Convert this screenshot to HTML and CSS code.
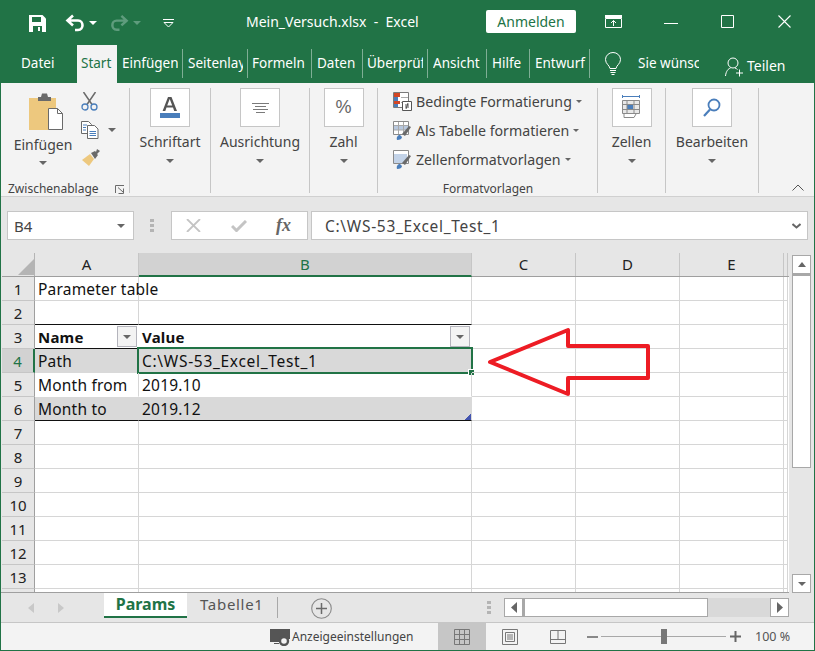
FILE: index.html
```html
<!DOCTYPE html>
<html>
<head>
	<title>Mein_Versuch.xlsx - Excel</title>
	<meta name="viewport" content="width=device-width, initial-scale=1">
	<link rel="stylesheet" href="styles.css">
</head>
<body>
<div class="app">
	<div class="titlebar">
		<svg class="qa-save" width="17" height="17" viewBox="0 0 17 17"><path fill="#fff" d="M0 0h13.5L17 3.5V17H0z"/><path fill="#217346" d="M3 2h9v5H3zM4 11h9v6H4z"/><path fill="#fff" d="M9 12h2v4H9z"/></svg>
		<svg class="qa-undo" width="20" height="18" viewBox="0 0 20 18"><path fill="none" stroke="#fff" stroke-width="2.6" d="M8 1.5 2.5 6.5 8 11.500M2.500 6.500H13c6 0 6 9.500 0 9.500H10"/></svg>
		<span class="caret white qa-c1"></span>
		<svg class="qa-redo" width="19" height="18" viewBox="0 0 20 18"><path fill="none" stroke="#5f9c7d" stroke-width="2.6" d="M12 1.500 17.500 6.500 12 11.500M17.500 6.500H7c-6 0-6 9.500 0 9.500h3"/></svg>
		<span class="caret dim qa-c2"></span>
		<svg class="qa-more" width="11" height="9" viewBox="0 0 11 9"><path fill="#fff" d="M0 0h11v1H0z"/><path fill="none" stroke="#fff" d="M1 3.500h9L5.500 8z"/></svg>
		<div class="doc-title">Mein_Versuch.xlsx&nbsp; -&nbsp; Excel</div>
		<div class="signin">Anmelden</div>
		<svg class="win-display" width="17" height="13" viewBox="0 0 17 13"><path fill="none" stroke="#fff" d="M.5 3.500h16v9H.5z"/><path fill="#fff" d="M0 0h17v3H0z"/><path fill="none" stroke="#fff" d="M8.500 11V5.500M6 8l2.500-2.500L11 8"/></svg>
		<svg class="win-min" width="14" height="1" viewBox="0 0 14 1"><path fill="#fff" d="M0 0h14v1H0z"/></svg>
		<svg class="win-max" width="13" height="13" viewBox="0 0 13 13"><path fill="none" stroke="#fff" d="M.5.500h12v12H.5z"/></svg>
		<svg class="win-close" width="13" height="13" viewBox="0 0 13 13"><path stroke="#fff" stroke-width="1.100" d="M.5.500l12 12M12.500.500l-12 12"/></svg>
	</div>

	<div class="tabs">
		<div class="tab tab-file"><span>Datei</span></div>
		<div class="tab tab-active"><span>Start</span></div>
		<div class="tab tab-ins sep"><span>Einfügen</span></div>
		<div class="tab tab-lay sep"><span>Seitenlayout</span></div>
		<div class="tab tab-for sep"><span>Formeln</span></div>
		<div class="tab tab-dat sep"><span>Daten</span></div>
		<div class="tab tab-rev sep"><span>Überprüfen</span></div>
		<div class="tab tab-vie sep"><span>Ansicht</span></div>
		<div class="tab tab-hil sep"><span>Hilfe</span></div>
		<div class="tab tab-ent sep"><span>Entwurf</span></div>
		<svg class="bulb" width="16" height="24" viewBox="0 0 16 24"><path fill="none" stroke="#fff" d="M5 16.500C4.500 13 .5 12 .5 7.500a7.500 7 0 0 1 15 0C15.500 12 11.500 13 11 16.500z"/><path stroke="#fff" d="M5 18.500h6M5.500 20.500h5M6.500 22.500h3"/></svg>
		<div class="tell">Sie wünschen</div>
		<svg class="share-icon" width="20" height="20" viewBox="0 0 20 20"><circle cx="8" cy="6" r="5" fill="none" stroke="#fff"/><path fill="none" stroke="#fff" d="M.5 19c.5-5 3-7.500 5-8M10 11c1 .3 2 1 2.500 1.500"/><path stroke="#fff" d="M14.500 12.500v7M11 16h7"/></svg>
		<div class="share">Teilen</div>
	</div>

	<div class="ribbon">
		<div class="group g-clip">
			<div class="clip-body">
				<div class="paste">
					<svg width="34" height="37" viewBox="0 0 34 37"><path fill="#edc87e" d="M0 5h27v33H0z"/><path fill="#6a6a6a" d="M9 4h3l1-3.500h5L19 4h3v4H9z"/><path fill="#fff" stroke="#6a6a6a" d="M19.500 15.500h9l5 5v16h-14z"/><path fill="none" stroke="#6a6a6a" d="M28.500 15.500v5h5"/></svg>
					<div class="paste-label">Einfügen</div>
					<span class="caret"></span>
				</div>
				<div class="clip-tools">
					<svg width="17" height="19" viewBox="0 0 17 19"><path stroke="#6a6a6a" stroke-width="1.500" d="M2.500 0 11 12.500M14.500 0 6 12.500"/><circle cx="4" cy="15" r="3" fill="none" stroke="#4a7ebb" stroke-width="1.300"/><circle cx="13" cy="15" r="3" fill="none" stroke="#4a7ebb" stroke-width="1.300"/></svg>
					<div class="copy-row">
						<svg width="18" height="18" viewBox="0 0 18 18"><path fill="#fff" stroke="#6a6a6a" d="M.5.500h7l3 3v9H.5z"/><path fill="#fff" stroke="#6a6a6a" d="M6.500 4.500h7l3.500 3.500v9.500H6.500z"/><path stroke="#4a7ebb" d="M2 4h4M2 6.500h3M2 9h3M8.500 10.500h6.500M8.500 12.500h6.500M8.500 14.500h6.500"/></svg>
						<span class="caret"></span>
					</div>
					<svg width="19" height="17" viewBox="0 0 19 17"><path fill="#edc87e" d="M1 11 9 5l4 5-5 7z"/><path fill="#6a6a6a" d="M10 4l4-2 1 1 1-3 3 2-3 3 1 1-3 4z"/></svg>
				</div>
			</div>
			<div class="group-foot">
				<span class="label-clip">Zwischenablage</span>
				<svg class="launcher" width="10" height="9" viewBox="0 0 10 9"><path fill="none" stroke="#6a6a6a" d="M.5 8V.5h8.500M3 2.500 8 7M8.500 3.500v5h-5"/></svg>
			</div>
		</div>

		<div class="group g-font big">
			<div class="big-btn"><svg width="20" height="22" viewBox="0 0 20 22"><path fill="#555" d="M8 0h3.500L17 14h-2.800l-1.200-3.500H6.500L5.300 14H2.600zM7.200 8.500h5L9.700 2z"/><path fill="#4a7ebb" d="M0 16h20v5H0z"/></svg></div>
			<div class="big-label">Schriftart</div>
			<span class="caret"></span>
		</div>
		<div class="group g-align big">
			<div class="big-btn"><svg width="17" height="10" viewBox="0 0 17 10"><path stroke="#7a7a7a" d="M0 .5h17M3 3.500h11M1 6.500h15M4 9.500h9"/></svg></div>
			<div class="big-label">Ausrichtung</div>
			<span class="caret"></span>
		</div>
		<div class="group g-num big">
			<div class="big-btn"><span class="percent">%</span></div>
			<div class="big-label">Zahl</div>
			<span class="caret"></span>
		</div>

		<div class="group g-styles">
			<div class="style-row">
				<svg width="19" height="19" viewBox="0 0 19 19"><path fill="#fff" stroke="#7a7a7a" d="M.5.500h15v15H.5z"/><path fill="#d24726" d="M1 1h6v4H1zM1 9h6v3H1z"/><path fill="#4a7ebb" d="M1 5h4v4H1zM1 12h4v3H1z"/><path stroke="#aaa" d="M8 5.500h7M8 10.500h2"/><path fill="#fff" stroke="#555" d="M9.500 9.500h9v9h-9z"/><path stroke="#555" d="M12 13h4M12 15h4M13 17l2-6"/></svg>
				<span class="style-text">Bedingte Formatierung</span><span class="caret"></span>
			</div>
			<div class="style-row">
				<svg width="19" height="19" viewBox="0 0 19 19"><path fill="#fff" stroke="#8a8a8a" d="M.5.500h15v13H.5z"/><path fill="#b8c8de" d="M1 5h14v4H1z"/><path stroke="#a8a8a8" d="M1 4.500h14M1 9h14M5.500 1v12M10.500 1v12"/><path fill="#4a7ebb" d="M4 19c-1-3 1-5 3-5l2 2c0 2-2 3-5 3z"/><path fill="#6a6a6a" d="M9 13l7-8 2 1-6 9z"/></svg>
				<span class="style-text">Als Tabelle formatieren</span><span class="caret"></span>
			</div>
			<div class="style-row">
				<svg width="19" height="19" viewBox="0 0 19 19"><path fill="#fff" stroke="#8a8a8a" d="M.5.500h15v13H.5z"/><path fill="#c3d3e8" d="M1 4h13v9H1z"/><path fill="#4a7ebb" d="M4 19c-1-3 1-5 3-5l2 2c0 2-2 3-5 3z"/><path fill="#6a6a6a" d="M9 13l7-8 2 1-6 9z"/></svg>
				<span class="style-text">Zellenformatvorlagen</span><span class="caret"></span>
			</div>
			<div class="styles-foot">Formatvorlagen</div>
		</div>

		<div class="group g-cells big">
			<div class="big-btn"><svg width="22" height="25" viewBox="0 0 22 25"><path stroke="#4a7ebb" d="M2 1.500h16M1.500 0v3M18.500 0v3"/><path fill="#e8e8e8" stroke="#8a8a8a" d="M1.500 5.500h17v13h-17z"/><path fill="#4a7ebb" d="M6 9h6v5H6z"/><path stroke="#8a8a8a" d="M1 9.500h18M1 14.500h18M6 5v14M13 5v14"/><path fill="none" stroke="#8a8a8a" d="M3 19v3.500h10l2-3.500"/></svg></div>
			<div class="big-label">Zellen</div>
			<span class="caret"></span>
		</div>
		<div class="group g-edit big">
			<div class="big-btn"><svg width="18" height="19" viewBox="0 0 18 19"><circle cx="11" cy="7" r="5.500" fill="none" stroke="#4a7ebb" stroke-width="1.800"/><path stroke="#4a7ebb" stroke-width="2.200" d="M7 11.500 1 18"/></svg></div>
			<div class="big-label">Bearbeiten</div>
			<span class="caret"></span>
		</div>
		<svg class="collapse" width="12" height="7" viewBox="0 0 12 7"><path fill="none" stroke="#555" d="M.5 6.500 6 1l5.500 5.500"/></svg>
	</div>

	<div class="formula-bar">
		<div class="name-box"><span>B4</span><span class="caret"></span></div>
		<div class="fb-dots"><i></i><i></i><i></i></div>
		<div class="fx-box">
			<svg width="15" height="13" viewBox="0 0 15 13"><path stroke="#c4c4c4" stroke-width="1.800" d="M1 0l13 13M14 0 1 13"/></svg>
			<svg width="16" height="12" viewBox="0 0 16 12"><path fill="none" stroke="#c4c4c4" stroke-width="3" d="M1 6l4.500 4.500L15 1"/></svg>
			<span class="fx">fx</span>
		</div>
		<div class="formula-input"><span class="path">C:\WS-53_Excel_Test_1</span>
			<svg width="9" height="6" viewBox="0 0 9 6"><path fill="none" stroke="#666" stroke-width="2" d="M.5 1l4 3.500 4-3.500"/></svg>
		</div>
	</div>

	<div class="sheet-area">
		<div class="sheet">
			<div class="cols">
				<div class="corner"><svg width="16" height="16" viewBox="0 0 16 16"><path fill="#b4b4b4" d="M16 0v16H0z"/></svg></div>
				<div class="col col-a">A</div>
				<div class="col col-b col-on">B</div>
				<div class="col col-c">C</div>
				<div class="col col-c">D</div>
				<div class="col col-c">E</div>
				<div class="col col-f"></div>
			</div>
			<div class="row"><div class="rh">1</div><div class="c col-a">Parameter table</div><div class="c col-b"></div><div class="c col-c"></div><div class="c col-c"></div><div class="c col-c"></div><div class="c col-f"></div></div>
			<div class="row"><div class="rh">2</div><div class="c col-a line-b"></div><div class="c col-b line-b"></div><div class="c col-c"></div><div class="c col-c"></div><div class="c col-c"></div><div class="c col-f"></div></div>
			<div class="row"><div class="rh">3</div><div class="c col-a head no-r line-b">Name<span class="filter"><span class="caret"></span></span></div><div class="c col-b head no-r line-b">Value<span class="filter"><span class="caret"></span></span></div><div class="c col-c"></div><div class="c col-c"></div><div class="c col-c"></div><div class="c col-f"></div></div>
			<div class="row"><div class="rh rh-on">4</div><div class="c col-a band no-r no-b">Path</div><div class="c col-b band no-r no-b"><span class="path">C:\WS-53_Excel_Test_1</span><span class="selection"><span class="handle"></span></span></div><div class="c col-c"></div><div class="c col-c"></div><div class="c col-c"></div><div class="c col-f"></div></div>
			<div class="row"><div class="rh">5</div><div class="c col-a no-b">Month from</div><div class="c col-b no-b">2019.10</div><div class="c col-c"></div><div class="c col-c"></div><div class="c col-c"></div><div class="c col-f"></div></div>
			<div class="row"><div class="rh">6</div><div class="c col-a band no-r line-b">Month to</div><div class="c col-b band no-r line-b">2019.12<span class="table-grip"></span></div><div class="c col-c"></div><div class="c col-c"></div><div class="c col-c"></div><div class="c col-f"></div></div>
			<div class="row"><div class="rh">7</div><div class="c col-a"></div><div class="c col-b"></div><div class="c col-c"></div><div class="c col-c"></div><div class="c col-c"></div><div class="c col-f"></div></div>
			<div class="row"><div class="rh">8</div><div class="c col-a"></div><div class="c col-b"></div><div class="c col-c"></div><div class="c col-c"></div><div class="c col-c"></div><div class="c col-f"></div></div>
			<div class="row"><div class="rh">9</div><div class="c col-a"></div><div class="c col-b"></div><div class="c col-c"></div><div class="c col-c"></div><div class="c col-c"></div><div class="c col-f"></div></div>
			<div class="row"><div class="rh">10</div><div class="c col-a"></div><div class="c col-b"></div><div class="c col-c"></div><div class="c col-c"></div><div class="c col-c"></div><div class="c col-f"></div></div>
			<div class="row"><div class="rh">11</div><div class="c col-a"></div><div class="c col-b"></div><div class="c col-c"></div><div class="c col-c"></div><div class="c col-c"></div><div class="c col-f"></div></div>
			<div class="row"><div class="rh">12</div><div class="c col-a"></div><div class="c col-b"></div><div class="c col-c"></div><div class="c col-c"></div><div class="c col-c"></div><div class="c col-f"></div></div>
			<div class="row"><div class="rh">13</div><div class="c col-a"></div><div class="c col-b"></div><div class="c col-c"></div><div class="c col-c"></div><div class="c col-c"></div><div class="c col-f"></div></div>
			<div class="row"><div class="rh"></div><div class="c col-a"></div><div class="c col-b"></div><div class="c col-c"></div><div class="c col-c"></div><div class="c col-c"></div><div class="c col-f"></div></div>
			<svg class="arrow" width="168" height="72" viewBox="0 0 168 72"><path fill="none" stroke="#ed1c24" stroke-width="4" stroke-linejoin="round" d="M4 35 82 3V19H162V51H82V67z"/></svg>
		</div>
		<div class="vscroll">
			<div class="sb-btn"><span class="caret up"></span></div>
			<div class="v-thumb"></div>
			<div class="v-track"></div>
			<div class="sb-btn"><span class="caret"></span></div>
		</div>
	</div>

	<div class="sheet-tabs">
		<svg class="nav" width="6" height="10" viewBox="0 0 6 10"><path fill="#c8c8c8" d="M6 0v10L0 5z"/></svg>
		<svg class="nav nav-r" width="6" height="10" viewBox="0 0 6 10"><path fill="#c8c8c8" d="M0 0v10l6-5z"/></svg>
		<div class="s-tab s-on">Params</div>
		<div class="s-tab s-off">Tabelle1</div>
		<div class="s-sep"></div>
		<svg class="add" width="21" height="21" viewBox="0 0 21 21"><circle cx="10.500" cy="10.500" r="9.800" fill="none" stroke="#8a8a8a" stroke-width="1.100"/><path stroke="#6a6a6a" stroke-width="1.500" d="M5 10.500h11M10.500 5v11"/></svg>
		<div class="fb-dots s-dots"><i></i><i></i><i></i></div>
		<div class="hscroll">
			<div class="h-btn"><svg width="6" height="11" viewBox="0 0 6 11"><path fill="#666" d="M6 0v11L0 5.500z"/></svg></div>
			<div class="h-thumb"></div>
			<div class="h-track"></div>
			<div class="h-btn"><svg width="6" height="11" viewBox="0 0 6 11"><path fill="#666" d="M0 0v11l6-5.500z"/></svg></div>
		</div>
	</div>

	<div class="statusbar">
		<svg class="display-icon" width="21" height="17" viewBox="0 0 21 17"><path fill="#555" d="M0 0h20v10h-7v3H0z"/><path fill="#555" d="M4 14h5v1H4z"/><circle cx="14" cy="12" r="4" fill="#f3f3f3" stroke="#555" stroke-width="2.400"/></svg>
		<span class="display-text">Anzeigeeinstellungen</span>
		<div class="view view-on"><svg width="16" height="16" viewBox="0 0 16 16"><path fill="none" stroke="#777" d="M.5.500h15v15H.5zM.5 5.500h15M.5 10.500h15M5.500.5v15M10.500.5v15"/></svg></div>
		<div class="view"><svg width="16" height="16" viewBox="0 0 16 16"><path fill="none" stroke="#777" d="M.5.500h15v15H.5zM3.500 3.500h9v9h-9zM5 6h6M5 8h6M5 10h6"/></svg></div>
		<div class="view"><svg width="16" height="14" viewBox="0 0 16 14"><path fill="none" stroke="#777" d="M.5.500h15v13H.5zM.5 9.500h7.500V.5M8 9.500h7.500"/></svg></div>
		<div class="zoom-minus"></div>
		<div class="zoom-slider"><span class="zoom-thumb"></span></div>
		<svg class="zoom-plus" width="11" height="11" viewBox="0 0 11 11"><path stroke="#666" stroke-width="2" d="M0 5.500h11M5.500 0v11"/></svg>
		<span class="zoom-value">100 %</span>
	</div>
</div>
</body>
</html>
```

FILE: styles.css
```css
* {
	box-sizing: border-box;
}
html, body {
	margin: 0;
	padding: 0;
	height: 100%;
	overflow: hidden;
}
body {
	font-family: "Noto Sans", Arial, sans-serif;
	font-size: 13px;
	color: #444;
}
svg {
	display: block;
	flex: none;
}
.app {
	width: 815px;
	height: 651px;
	background-color: #217346;
	border: 1px solid #217346;
	display: flex;
	flex-direction: column;
}
.caret {
	display: inline-block;
	flex: none;
	width: 0;
	height: 0;
	border-left: 4px solid transparent;
	border-right: 4px solid transparent;
	border-top: 4px solid #666;
}
.caret.up {
	border-top: 0;
	border-bottom: 5px solid #666;
}
.caret.white {
	border-top-color: #fff;
}
.caret.dim {
	border-top-color: #5f9c7d;
}

/* title bar */
.titlebar {
	height: 41px;
	display: flex;
	align-items: center;
	color: #fff;
	padding-top: 3px;
}
.qa-save { margin-left: 28px; }
.qa-undo { margin-left: 19px; }
.qa-c1 { margin-left: 4px; }
.qa-redo { margin-left: 13px; }
.qa-c2 { margin-left: 4px; }
.qa-more { margin-left: 22px; }
.doc-title {
	margin: -3px 0 0 72px;
	width: 240px;
	font-size: 14px;
	white-space: nowrap;
}
.signin {
	width: 90px;
	height: 23px;
	margin-top: -3px;
	background-color: #fff;
	border-radius: 2px;
	color: #217346;
	font-size: 14px;
	line-height: 23px;
	text-align: center;
}
.win-display { margin-left: 29px; margin-top: -3px; }
.win-min { margin-left: 42px; }
.win-max { margin-left: 43px; margin-top: -3px; }
.win-close { margin-left: 44px; margin-top: -3px; }

/* ribbon tabs */
.tabs {
	height: 41px;
	display: flex;
	align-items: stretch;
	color: #fff;
	font-size: 13.5px;
	padding-top: 3px;
}
.tab {
	flex: none;
	padding-left: 5px;
	line-height: 37px;
	white-space: nowrap;
}
.tab span {
	display: block;
	overflow: hidden;
}
.tab.sep {
	background: linear-gradient(#7fae95, #7fae95) no-repeat right 0 top 4px / 1px 29px;
}
.tab-file { width: 76px; padding-left: 20px; }
.tab-active {
	width: 40px;
	padding-left: 4px;
	background-color: #f3f3f3;
	color: #217346;
}
.tab-ins { width: 66px; padding-right: 5px; }
.tab-lay { width: 65px; padding-right: 5px; }
.tab-for { width: 64px; padding-left: 4px; }
.tab-dat { width: 51px; }
.tab-rev { width: 65px; padding: 0 5px 0 4px; }
.tab-vie { width: 59px; }
.tab-hil { width: 43px; }
.tab-ent {
	width: 60px;
	background-color: #1a5c38;
}
.bulb { margin: 7px 0 0 15px; }
.tell {
	width: 61px;
	margin-left: 17px;
	line-height: 37px;
	overflow: hidden;
	white-space: nowrap;
}
.share-icon { margin: 12px 0 0 26px; }
.share {
	margin-left: 2px;
	font-size: 14px;
	line-height: 42px;
}

/* ribbon */
.ribbon {
	position: relative;
	height: 114px;
	background-color: #f3f3f3;
	display: flex;
	border-bottom: 1px solid #d0d0d0;
}
.group {
	flex: none;
	margin: 5px 0 3px;
	border-right: 1px solid #c6c6c6;
}
.g-clip { width: 129px; display: flex; flex-direction: column; }
.g-font { width: 81px; }
.g-align { width: 99px; }
.g-num { width: 68px; }
.g-styles { width: 220px; padding-left: 15px; }
.g-cells { width: 68px; }
.g-edit { width: 93px; }
.big {
	display: flex;
	flex-direction: column;
	align-items: center;
}
.big-btn {
	width: 40px;
	height: 39px;
	background-color: #fff;
	border: 1px solid #c6c6c6;
	display: flex;
	align-items: center;
	justify-content: center;
}
.big-label {
	margin-top: 5px;
	font-size: 14px;
	line-height: 20px;
	white-space: nowrap;
}
.big .caret {
	margin-top: 7px;
}
.percent {
	font-family: "Liberation Sans", Arial, sans-serif;
	font-size: 18px;
	color: #666;
}
.clip-body {
	display: flex;
	flex: 1;
	padding-top: 4px;
}
.paste {
	width: 84px;
	display: flex;
	flex-direction: column;
	align-items: center;
}
.paste svg { margin: 1px 0 0 5px; }
.paste-label {
	margin-top: 5px;
	font-size: 14px;
	line-height: 20px;
}
.paste .caret { margin-top: 6px; }
.clip-tools {
	display: flex;
	flex-direction: column;
	gap: 10px;
	margin-left: -4px;
}
.copy-row {
	display: flex;
	align-items: center;
	gap: 9px;
}
.group-foot {
	display: flex;
	align-items: center;
	height: 20px;
	padding-left: 7px;
	margin-bottom: -5px;
}
.label-clip {
	font-size: 12px;
	width: 107px;
	white-space: nowrap;
}
.launcher { margin-top: 2px; }
.style-row {
	display: flex;
	align-items: center;
	height: 29px;
	gap: 4px;
	font-size: 14.2px;
	white-space: nowrap;
}
.style-row:first-child {
	margin-top: -1px;
}
.style-row .caret {
	border-left-width: 3.500px;
	border-right-width: 3.500px;
	border-top-width: 3.500px;
}
.styles-foot {
	margin-top: 5px;
	padding-right: 14px;
	text-align: center;
	font-size: 12px;
	line-height: 20px;
}
.collapse {
	position: absolute;
	right: 10px;
	bottom: 5px;
}

/* formula bar */
.formula-bar {
	height: 55px;
	background-color: #e6e6e6;
	display: flex;
	align-items: flex-start;
	padding: 14px 0 0 6px;
}
.name-box, .fx-box, .formula-input {
	height: 29px;
	background-color: #fff;
	border: 1px solid #c6c6c6;
	display: flex;
	align-items: center;
}
.name-box {
	width: 127px;
	padding: 0 8px 0 6px;
	justify-content: space-between;
	font-size: 15px;
}
.fb-dots {
	display: flex;
	flex-direction: column;
	gap: 2px;
	margin: 8px 17px 0 16px;
}
.fb-dots i {
	display: block;
	width: 4px;
	height: 3px;
	background-color: #b4b4b4;
}
.fx-box {
	width: 137px;
	padding-left: 14px;
	gap: 30px;
}
.fx {
	font-family: "Liberation Serif", serif;
	font-style: italic;
	font-weight: bold;
	font-size: 18px;
	color: #666;
	margin-left: -1px;
}
.formula-input {
	width: 497px;
	margin-left: 3px;
	padding: 0 6px 0 13px;
	justify-content: space-between;
	font-size: 15.500px;
	color: #444;
}
.path {
	letter-spacing: .7px;
}

/* sheet */
.sheet-area {
	height: 341px;
	background-color: #e6e6e6;
	display: flex;
}
.sheet {
	position: relative;
	width: 788px;
	padding: 1px 0 0 1px;
	overflow: hidden;
	border-bottom: 1px solid #9f9f9f;
}
.cols, .row {
	display: flex;
}
.cols {
	height: 24px;
	border-bottom: 1px solid #9f9f9f;
}
.corner {
	width: 33px;
	padding: 6px 0 0 16px;
	border-right: 1px solid #b4b4b4;
}
.col {
	flex: none;
	text-align: center;
	font-size: 15px;
	line-height: 23px;
	color: #222;
	border-right: 1px solid #c6c6c6;
}
.col-a { width: 104px; }
.col-b { width: 333px; }
.col-c { width: 104px; }
.col-f { width: 4px; }
.col-on {
	background-color: #d2d2d2;
	color: #217346;
	border-bottom: 2px solid #217346;
	height: 24px;
}
.row {
	height: 24px;
	background-color: #fff;
}
.rh {
	width: 33px;
	flex: none;
	background-color: #e6e6e6;
	border-right: 1px solid #9f9f9f;
	border-bottom: 1px solid #c6c6c6;
	text-align: center;
	font-size: 15px;
	line-height: 24px;
	color: #222;
}
.rh-on {
	background-color: #d2d2d2;
	color: #217346;
	border-right: 2px solid #217346;
}
.c {
	position: relative;
	flex: none;
	padding-left: 3px;
	border-right: 1px solid #d6d6d6;
	border-bottom: 1px solid #d6d6d6;
	font-size: 15.500px;
	letter-spacing: .2px;
	line-height: 25px;
	color: #111;
	white-space: nowrap;
}
.line-b { border-bottom-color: #111; }
.no-r { border-right-color: transparent; }
.no-b { border-bottom-color: transparent; }
.band { background-color: #d9d9d9; }
.head { font-weight: bold; font-size: 15px; }
.filter {
	position: absolute;
	right: 1px;
	top: 1px;
	width: 20px;
	height: 21px;
	background-color: #f3f3f3;
	border: 1px solid #b4b4bc;
	display: flex;
	align-items: center;
	justify-content: center;
}
.selection {
	position: absolute;
	left: -2px;
	top: -2px;
	width: 336px;
	height: 27px;
	border: 2px solid #217346;
	pointer-events: none;
}
.handle {
	position: absolute;
	right: -3px;
	bottom: -3px;
	width: 5px;
	height: 5px;
	background-color: #217346;
	outline: 1px solid #fff;
}
.table-grip {
	position: absolute;
	right: 0;
	bottom: 0;
	width: 6px;
	height: 6px;
	background: linear-gradient(135deg, transparent 50%, #4455b0 50%);
}
.arrow {
	position: absolute;
	left: 485px;
	top: 75px;
}
.vscroll {
	width: 19px;
	margin-left: 3px;
	display: flex;
	flex-direction: column;
	padding-top: 3px;
}
.sb-btn {
	height: 19px;
	background-color: #fff;
	border: 1px solid #a8a8a8;
	display: flex;
	align-items: center;
	justify-content: center;
	flex: none;
}
.v-thumb {
	height: 194px;
	background-color: #fff;
	border: 1px solid #a8a8a8;
	border-top-width: 2px;
}
.v-track {
	flex: 1;
	background-color: #e6e6e6;
}

/* sheet tabs */
.sheet-tabs {
	height: 29px;
	background-color: #e6e6e6;
	display: flex;
	align-items: flex-start;
}
.nav { margin: 10px 0 0 27px; }
.nav-r { margin-left: 24px; }
.s-tab {
	height: 25px;
	font-size: 15px;
	line-height: 22px;
	flex: none;
}
.s-on {
	width: 83px;
	margin-left: 40px;
	text-align: center;
	background-color: #fff;
	color: #217346;
	font-size: 16px;
	font-weight: bold;
	border-bottom: 2px solid #217346;
}
.s-off {
	width: 87px;
	padding-left: 13px;
	color: #555;
	letter-spacing: .7px;
}
.s-sep {
	width: 1px;
	height: 21px;
	margin: 4px 0 0 3px;
	background-color: #a8a8a8;
}
.add { margin: 5px 0 0 33px; }
.s-dots { margin: 8px 0 0 155px; }
.hscroll {
	display: flex;
	width: 285px;
	height: 19px;
	margin: 5px 0 0 13px;
	flex: none;
}
.h-btn {
	width: 19px;
	background-color: #fff;
	border: 1px solid #a8a8a8;
	display: flex;
	align-items: center;
	justify-content: center;
	flex: none;
}
.h-thumb {
	width: 185px;
	background-color: #fff;
	border: 1px solid #a8a8a8;
	border-left-width: 2px;
}
.h-track {
	flex: 1;
	background-color: #d9d9d9;
}

/* status bar */
.statusbar {
	flex: 1;
	background-color: #f3f3f3;
	border-top: 1px solid #c6c6c6;
	display: flex;
	align-items: center;
}
.display-icon { margin-left: 269px; margin-top: 2px; }
.display-text {
	margin-left: 1px;
	width: 146px;
	font-size: 12px;
	white-space: nowrap;
}
.view {
	width: 48px;
	height: 100%;
	display: flex;
	align-items: center;
	justify-content: center;
	flex: none;
}
.view-on { background-color: #c6c6c6; }
.zoom-minus {
	width: 11px;
	height: 2px;
	margin-left: 5px;
	background-color: #888;
}
.zoom-slider {
	position: relative;
	width: 125px;
	height: 1px;
	margin-left: 3px;
	background-color: #a8a8a8;
}
.zoom-thumb {
	position: absolute;
	left: 60px;
	top: -7px;
	width: 6px;
	height: 15px;
	background-color: #777;
}
.zoom-plus { margin-left: 4px; }
.zoom-value {
	margin-left: 14px;
	font-size: 12.500px;
	color: #555;
}
```
